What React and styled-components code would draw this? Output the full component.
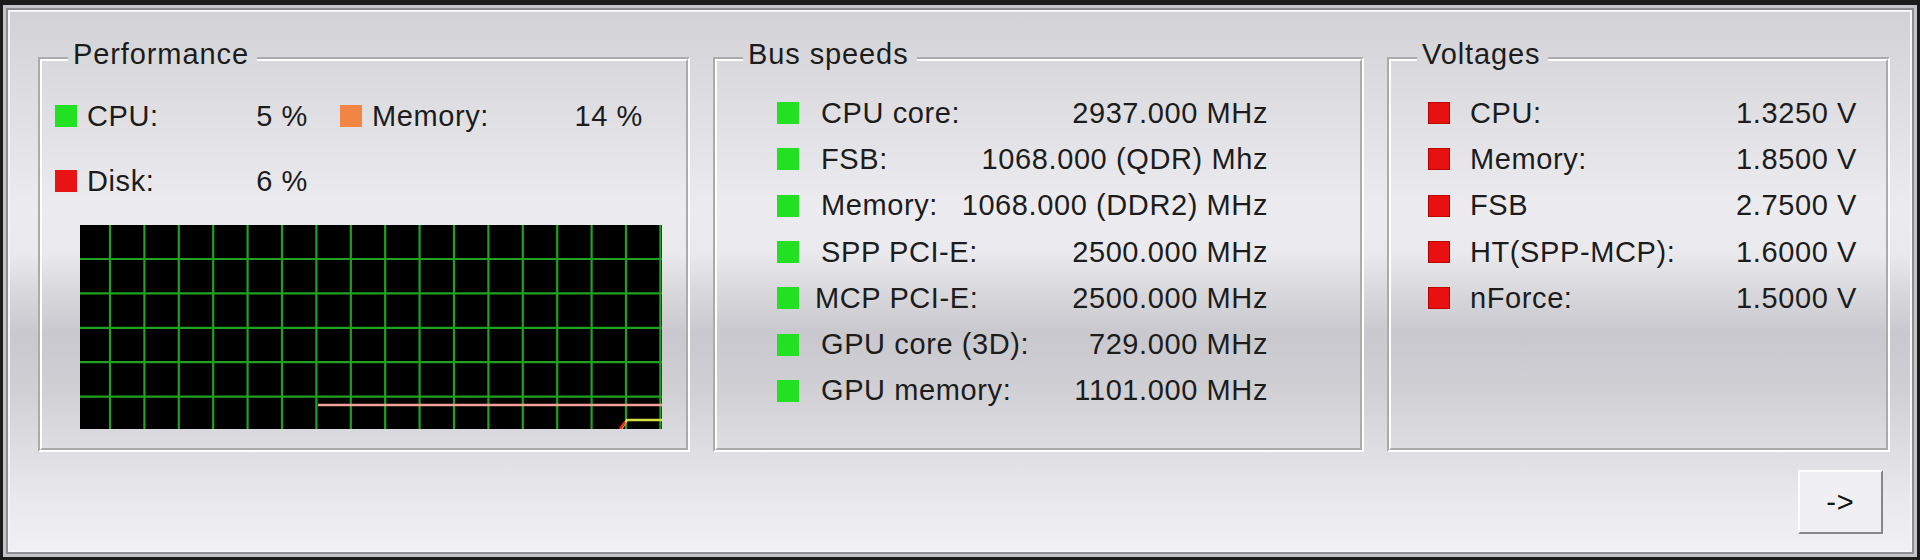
import React from 'react'
import styled, { createGlobalStyle } from 'styled-components'

const GlobalStyle = createGlobalStyle`
  html, body {
    margin: 0;
    padding: 0;
    background: #1b1b1b;
  }
  body {
    font-family: "Liberation Sans", Arial, sans-serif;
  }
`

const perf = [
  [
    { label: 'CPU:', value: '5 %', color: '#22e022', width: 253 },
    { label: 'Memory:', value: '14 %', color: '#f08544', width: 303 },
  ],
  [{ label: 'Disk:', value: '6 %', color: '#e81414', width: 253 }],
]

const bus = [
  { label: 'CPU core:', value: '2937.000 MHz' },
  { label: 'FSB:', value: '1068.000 (QDR) Mhz' },
  { label: 'Memory:', value: '1068.000 (DDR2) MHz' },
  { label: 'SPP PCI-E:', value: '2500.000 MHz' },
  { label: 'MCP PCI-E:', value: '2500.000 MHz', nudge: -6 },
  { label: 'GPU core (3D):', value: '729.000 MHz' },
  { label: 'GPU memory:', value: '1101.000 MHz' },
]

const volts = [
  { label: 'CPU:', value: '1.3250 V' },
  { label: 'Memory:', value: '1.8500 V' },
  { label: 'FSB', value: '2.7500 V' },
  { label: 'HT(SPP-MCP):', value: '1.6000 V' },
  { label: 'nForce:', value: '1.5000 V' },
]

function Chart() {
  const w = 582
  const h = 204
  const cols = Array.from({ length: 17 }, (_, i) => 30 + i * 34.4)
  const rows = Array.from({ length: 5 }, (_, i) => 34 + i * 34.4)
  return (
    <ChartBox>
      <svg width={w} height={h} viewBox={`0 0 ${w} ${h}`}>
        <rect width={w} height={h} fill="#000" />
        {rows.map((y) => (
          <line key={'h' + y} x1="0" x2={w} y1={y} y2={y} stroke="#1fa21f" strokeWidth="2.2" />
        ))}
        {cols.map((x) => (
          <line key={'v' + x} x1={x} x2={x} y1="0" y2={h} stroke="#1fa21f" strokeWidth="2.2" />
        ))}
        <line x1="238" x2={w} y1="180" y2="180" stroke="#f2a09a" strokeWidth="2.5" />
        <polyline points={`541,204 547,195 ${w},195`} fill="none" stroke="#d4e040" strokeWidth="2.5" />
        <line x1="540" y1="204" x2="545" y2="197" stroke="#ff2020" strokeWidth="2.5" />
      </svg>
    </ChartBox>
  )
}

function App() {
  return (
    <>
      <GlobalStyle />
      <Window>
        <Panels>
          <Group $width={652}>
            <Legend>Performance</Legend>
            <PerfBody>
              <StatLines>
                {perf.map((line, i) => (
                  <StatLine key={i}>
                    {line.map((s) => (
                      <Stat key={s.label} $width={s.width}>
                        <Swatch $color={s.color} />
                        <Label>{s.label}</Label>
                        <Value>{s.value}</Value>
                      </Stat>
                    ))}
                  </StatLine>
                ))}
              </StatLines>
              <Chart />
            </PerfBody>
          </Group>

          <Group $width={651}>
            <Legend>Bus speeds</Legend>
            <ListBody $left={60} $rowWidth={491}>
              {bus.map((r) => (
                <Row key={r.label}>
                  <Swatch $color="#22e022" />
                  <Label $gap={22 + (r.nudge || 0)}>{r.label}</Label>
                  <Value>{r.value}</Value>
                </Row>
              ))}
            </ListBody>
          </Group>

          <Group $width={503}>
            <Legend>Voltages</Legend>
            <ListBody $left={37} $rowWidth={429}>
              {volts.map((r) => (
                <Row key={r.label}>
                  <Swatch $color="#e81010" $edge="#b80000" />
                  <Label $gap={20}>{r.label}</Label>
                  <Value>{r.value}</Value>
                </Row>
              ))}
            </ListBody>
          </Group>
        </Panels>

        <Footer>
          <NextButton type="button">-&gt;</NextButton>
        </Footer>
      </Window>
    </>
  )
}

const Window = styled.div`
  box-sizing: border-box;
  margin: 5px 3px 3px 3px;
  height: 552px;
  border: 3px solid #c4c4c8;
  box-shadow: inset 0 0 0 2px #8e8e92, inset 0 0 0 4px #f6f6f8;
  padding: 30px 24px 0 32px;
  background: linear-gradient(
    180deg,
    #d2d2d6 0px,
    #dadade 60px,
    #e4e4e8 140px,
    #ececf0 200px,
    #eaeaee 245px,
    #d8d8dc 285px,
    #c8c8ce 325px,
    #cfcfd4 380px,
    #dedee2 440px,
    #e9e9ed 490px,
    #f1f1f5 545px
  );
  color: #1c1c1c;
  font-family: "Liberation Sans", Arial, sans-serif;
  font-size: 29px;
  letter-spacing: 0.6px;
`

const Panels = styled.div`
  display: flex;
  gap: 23px;
`

const Group = styled.fieldset`
  box-sizing: border-box;
  width: ${(p) => p.$width}px;
  height: 414px;
  margin: 0;
  padding: 0;
  min-width: 0;
  border: 4px groove #ffffff;
`

const Legend = styled.legend`
  margin-left: 26px;
  padding: 0 8px 10px 5px;
  line-height: 32px;
  font-size: 29px;
  letter-spacing: 0.9px;
`

const PerfBody = styled.div`
  padding: 20px 0 0 13px;
`

const StatLines = styled.div`
  display: flex;
  flex-direction: column;
  gap: 33px;
`

const StatLine = styled.div`
  display: flex;
  gap: 32px;
  height: 32px;
  align-items: center;
`

const Stat = styled.div`
  display: flex;
  align-items: center;
  width: ${(p) => p.$width}px;
`

const ChartBox = styled.div`
  margin: 28px 0 0 25px;
  svg {
    display: block;
  }
`

const ListBody = styled.div`
  padding: 10px 0 0 ${(p) => p.$left}px;
  width: ${(p) => p.$rowWidth}px;
`

const Row = styled.div`
  display: flex;
  align-items: center;
  height: 46.3px;
`

const Swatch = styled.span`
  flex: none;
  box-sizing: border-box;
  width: 22px;
  height: 22px;
  background: ${(p) => p.$color};
  border: 1px solid ${(p) => p.$edge || p.$color};
`

const Label = styled.span`
  flex: 1;
  margin-left: ${(p) => (p.$gap != null ? p.$gap : 10)}px;
  white-space: nowrap;
`

const Value = styled.span`
  white-space: nowrap;
`

const Footer = styled.div`
  display: flex;
  justify-content: flex-end;
  padding: 18px 7px 0 0;
`

const NextButton = styled.button`
  box-sizing: border-box;
  width: 85px;
  height: 64px;
  padding: 0;
  background: #f0f0f3;
  border: 2px solid;
  border-color: #ffffff #86868a #86868a #ffffff;
  font-family: "Liberation Sans", Arial, sans-serif;
  font-size: 29px;
  color: #111;
  letter-spacing: 1px;
`

export default App
